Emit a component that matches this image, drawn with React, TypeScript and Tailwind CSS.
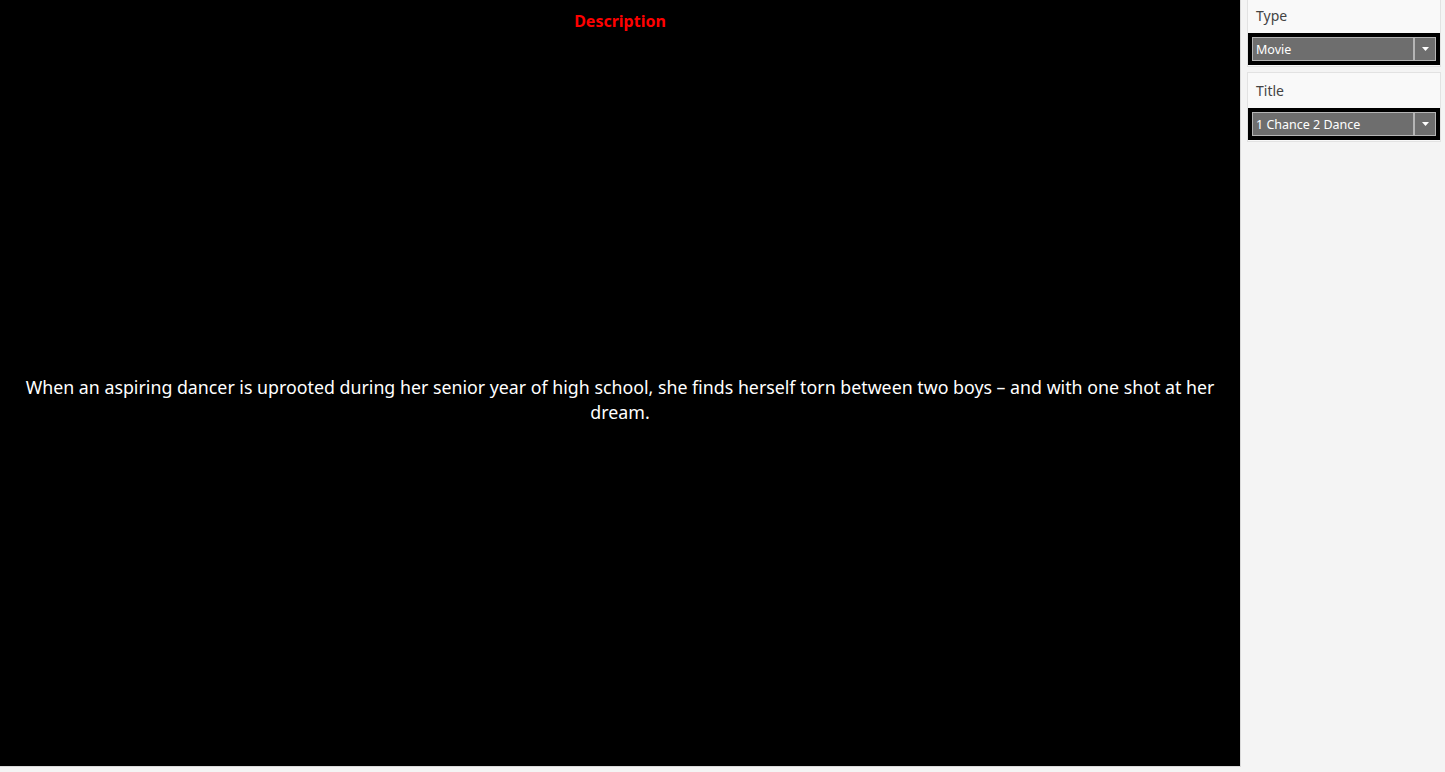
import React from 'react';

const FILTERS = [
  { label: 'Type', value: 'Movie' },
  { label: 'Title', value: '1 Chance 2 Dance' },
];

function Dropdown({ value }: { value: string }) {
  return (
    <div className="bg-black p-[4px]">
      <div className="flex h-[24px] border border-[#b5b5b5] bg-[#6e6e6e]">
        <span className="flex-1 truncate pl-[3px] text-[12.5px] leading-[23px] text-white">{value}</span>
        <div className="flex w-[22px] items-center justify-center border-l-2 border-[#b5b5b5]">
          <svg width="7" height="4" viewBox="0 0 7 4">
            <path d="M0 0h7L3.5 4z" fill="#fff" />
          </svg>
        </div>
      </div>
    </div>
  );
}

export default function App() {
  return (
    <div
      className="flex h-[772px] w-[1445px] overflow-hidden bg-[#f4f4f4]"
      style={{ fontFamily: '"Noto Sans", "Open Sans", sans-serif' }}
    >
      <main className="flex h-[767px] w-[1241px] flex-col border-r border-b border-[#d9d9d9] bg-black">
        <h1 className="pt-[9px] text-center text-[16px] font-bold leading-[24px] text-[#ff0000]">
          Description
        </h1>
        <div className="flex flex-1 items-center justify-center px-[10px]">
          <p className="text-center text-[17.8px] leading-[25px] text-white">
            When an aspiring dancer is uprooted during her senior year of high school, she finds herself torn between two boys – and with one shot at her dream.
          </p>
        </div>
      </main>
      <aside className="-mt-[3px] flex flex-1 flex-col gap-[5px] pl-[6px] pr-[4px]">
        {FILTERS.map((f) => (
          <div key={f.label} className="border border-[#e2e2e2] bg-[#f9f9f9] pb-[1px]">
            <div className="h-[35px] px-[8px] pt-[7px] text-[14px] leading-[22px] text-[#444]">{f.label}</div>
            <Dropdown value={f.value} />
          </div>
        ))}
      </aside>
    </div>
  );
}
